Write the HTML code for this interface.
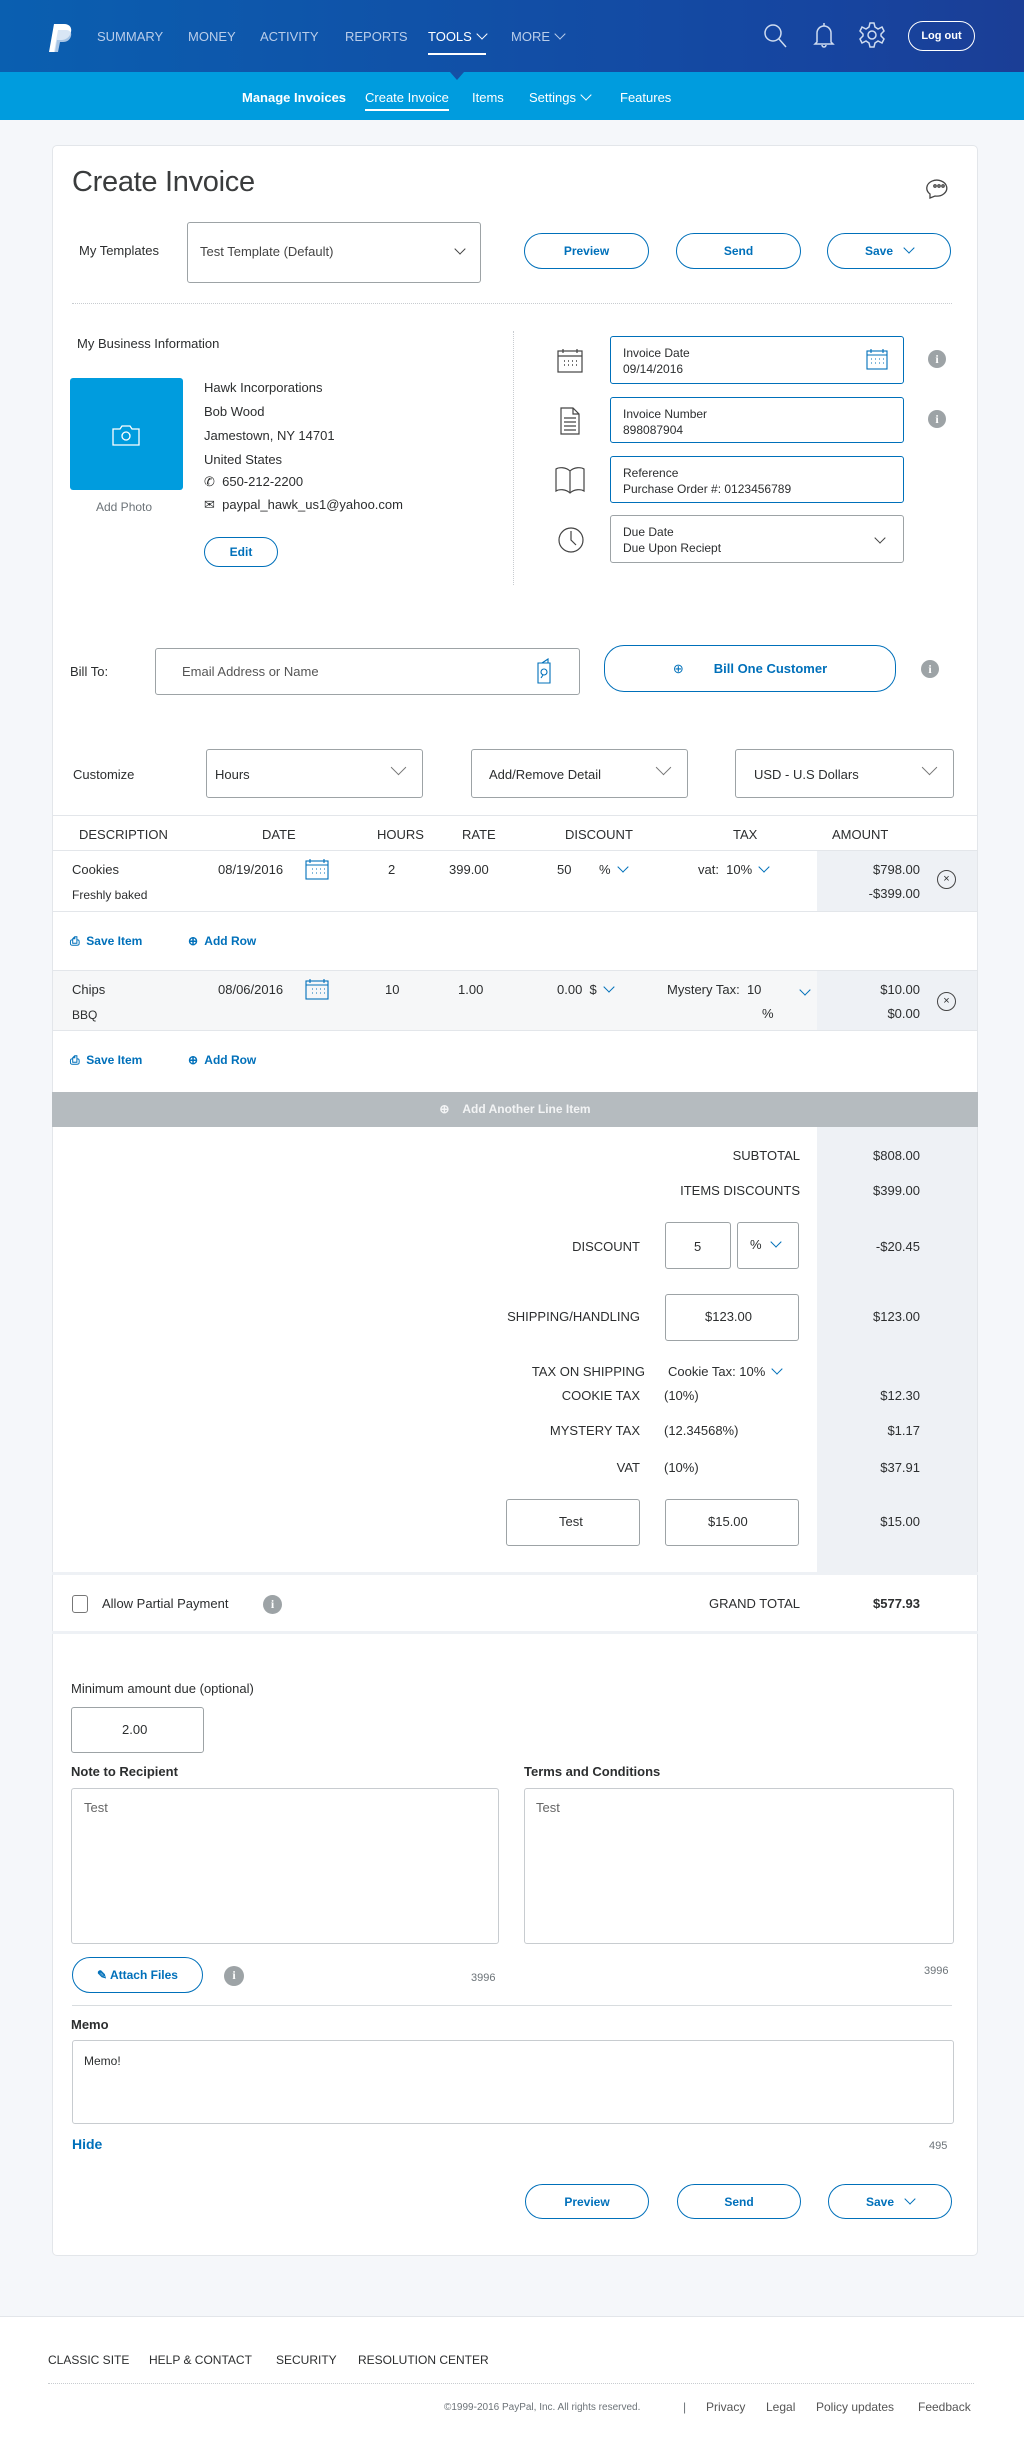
<!DOCTYPE html>
<html><head><meta charset="utf-8"><style>
*{box-sizing:border-box;margin:0;padding:0}
body{width:1024px;height:2449px;background:#f5f7fa;font-family:"Liberation Sans",sans-serif;color:#2c2e2f;position:relative;overflow:hidden;font-size:14px}
.a{position:absolute;white-space:nowrap}
.hdr{position:absolute;left:0;top:0;width:1024px;height:72px;background:linear-gradient(90deg,#0a5fb0,#1645a0 80%,#1b3e96)}
.sub{position:absolute;left:0;top:72px;width:1024px;height:48px;background:#009cde}
.nav{color:#b9cdea;font-size:13px;top:29px}
.sn{color:#fff;font-size:13px;top:90px}
.card{position:absolute;left:52px;top:145px;width:926px;height:2111px;background:#fff;border:1px solid #e3e6ea;border-radius:5px}
.btn{position:absolute;border:1.5px solid #0070ba;border-radius:20px;color:#0070ba;font-weight:bold;font-size:12px;display:flex;align-items:center;justify-content:center;background:#fff}
.box{position:absolute;border:1px solid #9da3a6;border-radius:3px;background:#fff}
.bbox{position:absolute;border:1px solid #0070ba;border-radius:3px;background:#fff;font-size:12px;padding:8px 12px;line-height:16px}
.info{position:absolute;width:18px;height:18px;border-radius:50%;background:#9da3a6;color:#fff;font-size:12px;font-weight:bold;text-align:center;line-height:18px;font-family:"Liberation Serif",serif}
.chev{display:inline-block;width:8px;height:8px;border-right:1.3px solid currentColor;border-bottom:1.3px solid currentColor;transform:rotate(45deg);margin-left:6px;position:relative;top:-3px}
.lbl{font-size:13px}
.r{text-align:right}
.blue{color:#0070ba}
</style></head><body>
<div class="hdr"></div>
<svg class="a" style="left:48px;top:22px" width="26" height="32" viewBox="0 0 26 32"><path d="M6 2h10c6 0 8 4 7 8-1 5-5 8-10 8H9l-2 12H1z" fill="#fff"/><path d="M10 8h8c4 0 6 3 5 6-1 4-4 6-8 6h-3l-2 10H6z" fill="#cfe0f2" opacity=".8"/></svg>
<div class="a nav" style="left:97px">SUMMARY</div>
<div class="a nav" style="left:188px">MONEY</div>
<div class="a nav" style="left:260px">ACTIVITY</div>
<div class="a nav" style="left:345px">REPORTS</div>
<div class="a nav" style="left:428px;color:#fff">TOOLS<span class="chev"></span></div>
<div class="a" style="left:428px;top:53px;width:58px;height:1.5px;background:#fff"></div>
<div class="a nav" style="left:511px">MORE<span class="chev"></span></div>
<svg class="a" style="left:762px;top:22px" width="26" height="28" viewBox="0 0 26 28" fill="none" stroke="#cfdcf0" stroke-width="1.5"><circle cx="11" cy="11" r="8"/><path d="M17 17l7 8"/></svg>
<svg class="a" style="left:812px;top:20px" width="24" height="30" viewBox="0 0 24 30" fill="none" stroke="#cfdcf0" stroke-width="1.5"><path d="M12 3v3M5 22V13a7 7 0 0114 0v9l2 2H3zM10 25a2 2 0 004 0"/></svg>
<svg class="a" style="left:858px;top:21px" width="28" height="28" viewBox="0 0 28 28" fill="none" stroke="#cfdcf0" stroke-width="1.5"><circle cx="14" cy="14" r="4"/><path d="M12 2h4l1 4 3 2 4-2 2 4-3 3v2l3 3-2 4-4-2-3 2-1 4h-4l-1-4-3-2-4 2-2-4 3-3v-2L2 10l2-4 4 2 3-2z"/></svg>
<div class="a" style="left:908px;top:21px;width:67px;height:30px;border:1.5px solid #fff;border-radius:15px;color:#fff;font-size:11px;font-weight:bold;display:flex;align-items:center;justify-content:center">Log out</div>
<div class="sub"></div>
<div class="a" style="left:450px;top:72px;width:0;height:0;border-left:7px solid transparent;border-right:7px solid transparent;border-top:8px solid #1450a6"></div>
<div class="a sn" style="left:242px;font-weight:bold">Manage Invoices</div>
<div class="a sn" style="left:365px">Create Invoice</div>
<div class="a" style="left:365px;top:109px;width:84px;height:1.5px;background:#fff"></div>
<div class="a sn" style="left:472px">Items</div>
<div class="a sn" style="left:529px">Settings<span class="chev"></span></div>
<div class="a sn" style="left:620px">Features</div>

<div class="card"></div>
<div class="a" style="left:72px;top:166px;font-size:29px;font-weight:300;color:#3a3c3d;letter-spacing:-0.3px">Create Invoice</div>
<svg class="a" style="left:926px;top:175px" width="26" height="24" viewBox="0 0 26 24" fill="none" stroke="#444" stroke-width="1.3"><path d="M4 19a10 8 0 1 1 5 2l-5 2z"/><circle cx="9" cy="11" r="1.2"/><circle cx="13" cy="11" r="1.2"/><circle cx="17" cy="11" r="1.2"/></svg>
<div class="a lbl" style="left:79px;top:243px">My Templates</div>
<div class="box" style="left:187px;top:222px;width:294px;height:61px"></div>
<div class="a lbl" style="left:200px;top:244px;color:#444">Test Template (Default)</div>
<div class="a" style="left:450px;top:243px;color:#444"><span class="chev"></span></div>
<div class="btn" style="left:524px;top:233px;width:125px;height:36px">Preview</div>
<div class="btn" style="left:676px;top:233px;width:125px;height:36px">Send</div>
<div class="btn" style="left:827px;top:233px;width:124px;height:36px">Save<span class="chev" style="margin-left:12px"></span></div>
<div class="a" style="left:72px;top:303px;width:880px;border-top:1px dotted #c8ccd0"></div>

<div class="a lbl" style="left:77px;top:336px">My Business Information</div>
<div class="a" style="left:70px;top:378px;width:113px;height:112px;background:#009cde;border-radius:3px"></div>
<svg class="a" style="left:112px;top:424px" width="28" height="22" viewBox="0 0 28 22" fill="none" stroke="#fff" stroke-width="1.3"><path d="M1 5h7l2-3h8l2 3h7v16H1z"/><circle cx="14" cy="12" r="4"/></svg>
<div class="a" style="left:96px;top:500px;font-size:12px;color:#6c7378">Add Photo</div>
<div class="a lbl" style="left:204px;top:376px;line-height:24px">Hawk Incorporations<br>Bob Wood<br>Jamestown, NY 14701<br>United States</div>
<div class="a lbl" style="left:204px;top:474px">✆&nbsp; 650-212-2200</div>
<div class="a lbl" style="left:204px;top:497px">✉&nbsp; paypal_hawk_us1@yahoo.com</div>
<div class="btn" style="left:204px;top:537px;width:74px;height:30px">Edit</div>
<div class="a" style="left:513px;top:331px;height:254px;border-left:1px dotted #c8ccd0"></div>

<svg class="a" style="left:556px;top:348px" width="28" height="26" viewBox="0 0 28 26" fill="none" stroke="#444" stroke-width="1.2"><rect x="2" y="3" width="24" height="21"/><path d="M2 8h24M7 1v4M21 1v4"/><path d="M8 13h1M12 13h1M16 13h1M20 13h1M8 17h1M12 17h1M16 17h1M20 17h1" stroke-width="1.5"/></svg>
<svg class="a" style="left:560px;top:407px" width="20" height="28" viewBox="0 0 20 28" fill="none" stroke="#444" stroke-width="1.2"><path d="M1 1h12l6 6v20H1zM13 1v6h6M4 11h12M4 15h12M4 19h12M4 23h12"/></svg>
<svg class="a" style="left:554px;top:466px" width="32" height="28" viewBox="0 0 32 28" fill="none" stroke="#444" stroke-width="1.2"><path d="M16 5C12 1 5 1 2 3v22c3-2 10-2 14 2 4-4 11-4 14-2V3c-3-2-10-2-14 2zM16 5v22"/></svg>
<svg class="a" style="left:557px;top:525px" width="28" height="30" viewBox="0 0 28 30" fill="none" stroke="#444" stroke-width="1.2"><circle cx="14" cy="15" r="12"/><path d="M14 6v9l5 5"/></svg>

<div class="bbox" style="left:610px;top:336px;width:294px;height:48px">Invoice Date<br>09/14/2016</div>
<svg class="a" style="left:866px;top:348px" width="22" height="22" viewBox="0 0 22 22" fill="none" stroke="#0070ba" stroke-width="1.1"><rect x="1" y="3" width="20" height="18"/><path d="M1 7h20M5 1v4M17 1v4M5 11h1M9 11h1M13 11h1M17 11h1M5 15h1M9 15h1M13 15h1M17 15h1"/></svg>
<div class="info" style="left:928px;top:350px">i</div>
<div class="bbox" style="left:610px;top:397px;width:294px;height:46px">Invoice Number<br>898087904</div>
<div class="info" style="left:928px;top:410px">i</div>
<div class="bbox" style="left:610px;top:456px;width:294px;height:47px">Reference<br>Purchase Order #: 0123456789</div>
<div class="bbox" style="left:610px;top:515px;width:294px;height:48px;border-color:#9da3a6">Due Date<br>Due Upon Reciept</div>
<div class="a" style="left:870px;top:532px;color:#444"><span class="chev"></span></div>

<div class="a lbl" style="left:70px;top:664px">Bill To:</div>
<div class="box" style="left:155px;top:648px;width:425px;height:47px"></div>
<div class="a lbl" style="left:182px;top:664px;color:#555">Email Address or Name</div>
<svg class="a" style="left:537px;top:658px" width="14" height="26" viewBox="0 0 14 26" fill="none" stroke="#0070ba" stroke-width="1.1"><path d="M1 5h12v20H1zM5 5l6-4v4"/><circle cx="7" cy="14" r="3"/><path d="M6 17l-2 3"/></svg>
<div class="btn" style="left:604px;top:645px;width:292px;height:47px;font-size:13px"><span style="font-weight:normal;margin-right:30px">⊕</span>Bill One Customer</div>
<div class="info" style="left:921px;top:660px">i</div>

<div class="a lbl" style="left:73px;top:767px">Customize</div>
<div class="box" style="left:206px;top:749px;width:217px;height:49px"></div>
<div class="a lbl" style="left:215px;top:767px">Hours</div>
<div class="a" style="left:387px;top:763px;color:#777;font-size:15px"><span class="chev" style="width:11px;height:11px"></span></div>
<div class="box" style="left:471px;top:749px;width:217px;height:49px"></div>
<div class="a lbl" style="left:489px;top:767px">Add/Remove Detail</div>
<div class="a" style="left:652px;top:763px;color:#777"><span class="chev" style="width:11px;height:11px"></span></div>
<div class="box" style="left:735px;top:749px;width:219px;height:49px"></div>
<div class="a lbl" style="left:754px;top:767px">USD - U.S Dollars</div>
<div class="a" style="left:918px;top:763px;color:#777"><span class="chev" style="width:11px;height:11px"></span></div>

<div class="a" style="left:52px;top:815px;width:926px;height:1px;background:#e3e6ea"></div>
<div class="a" style="left:52px;top:850px;width:926px;height:1px;background:#e3e6ea"></div>
<div class="a lbl" style="left:79px;top:827px">DESCRIPTION</div>
<div class="a lbl" style="left:262px;top:827px">DATE</div>
<div class="a lbl" style="left:377px;top:827px">HOURS</div>
<div class="a lbl" style="left:462px;top:827px">RATE</div>
<div class="a lbl" style="left:565px;top:827px">DISCOUNT</div>
<div class="a lbl" style="left:733px;top:827px">TAX</div>
<div class="a lbl" style="left:832px;top:827px">AMOUNT</div>

<div class="a" style="left:817px;top:851px;width:160px;height:60px;background:#eef1f5"></div>
<div class="a" style="left:52px;top:911px;width:926px;height:1px;background:#e3e6ea"></div>
<div class="a lbl" style="left:72px;top:862px">Cookies</div>
<div class="a" style="left:72px;top:888px;font-size:12px">Freshly baked</div>
<div class="a lbl" style="left:218px;top:862px">08/19/2016</div>
<svg class="a" style="left:305px;top:858px" width="24" height="22" viewBox="0 0 24 22" fill="none" stroke="#0070ba" stroke-width="1.1"><rect x="1" y="3" width="22" height="18"/><path d="M1 7h22M5 1v4M19 1v4M7 11h1M11 11h1M15 11h1M19 11h1M7 15h1M11 15h1M15 15h1M19 15h1"/></svg>
<div class="a lbl" style="left:388px;top:862px">2</div>
<div class="a lbl" style="left:449px;top:862px">399.00</div>
<div class="a lbl" style="left:557px;top:862px">50</div>
<div class="a lbl" style="left:599px;top:862px">%<span class="chev blue" style="margin-left:8px"></span></div>
<div class="a lbl" style="left:698px;top:862px">vat:&nbsp; 10%<span class="chev blue" style="margin-left:8px"></span></div>
<div class="a lbl r" style="left:820px;width:100px;top:862px">$798.00</div>
<div class="a lbl r" style="left:820px;width:100px;top:886px">-$399.00</div>
<div class="a" style="left:937px;top:870px;width:19px;height:19px;border:1px solid #444;border-radius:50%;font-size:11px;text-align:center;line-height:16px">×</div>

<div class="a blue" style="left:70px;top:934px;font-size:12px;font-weight:bold">⎙&nbsp; Save Item</div>
<div class="a blue" style="left:188px;top:934px;font-size:12px;font-weight:bold">⊕&nbsp; Add Row</div>

<div class="a" style="left:53px;top:970px;width:924px;height:61px;background:#f6f7f8;border-top:1px solid #e3e6ea;border-bottom:1px solid #e3e6ea"></div>
<div class="a" style="left:817px;top:971px;width:160px;height:59px;background:#eef1f5"></div>
<div class="a lbl" style="left:72px;top:982px">Chips</div>
<div class="a" style="left:72px;top:1008px;font-size:12px">BBQ</div>
<div class="a lbl" style="left:218px;top:982px">08/06/2016</div>
<svg class="a" style="left:305px;top:978px" width="24" height="22" viewBox="0 0 24 22" fill="none" stroke="#0070ba" stroke-width="1.1"><rect x="1" y="3" width="22" height="18"/><path d="M1 7h22M5 1v4M19 1v4M7 11h1M11 11h1M15 11h1M19 11h1M7 15h1M11 15h1M15 15h1M19 15h1"/></svg>
<div class="a lbl" style="left:385px;top:982px">10</div>
<div class="a lbl" style="left:458px;top:982px">1.00</div>
<div class="a lbl" style="left:557px;top:982px">0.00&nbsp; $<span class="chev blue" style="margin-left:8px"></span></div>
<div class="a lbl" style="left:667px;top:982px">Mystery Tax:&nbsp; 10</div>
<div class="a lbl blue" style="left:795px;top:985px"><span class="chev"></span></div>
<div class="a lbl" style="left:762px;top:1006px">%</div>
<div class="a lbl r" style="left:820px;width:100px;top:982px">$10.00</div>
<div class="a lbl r" style="left:820px;width:100px;top:1006px">$0.00</div>
<div class="a" style="left:937px;top:992px;width:19px;height:19px;border:1px solid #444;border-radius:50%;font-size:11px;text-align:center;line-height:16px">×</div>

<div class="a blue" style="left:70px;top:1053px;font-size:12px;font-weight:bold">⎙&nbsp; Save Item</div>
<div class="a blue" style="left:188px;top:1053px;font-size:12px;font-weight:bold">⊕&nbsp; Add Row</div>

<div class="a" style="left:52px;top:1092px;width:926px;height:35px;background:#b5bbbf;color:#f3f4f5;font-size:12px;font-weight:bold;text-align:center;line-height:35px">⊕ &nbsp;&nbsp; Add Another Line Item</div>

<div class="a" style="left:817px;top:1127px;width:160px;height:445px;background:#eef1f5"></div>
<div class="a lbl r" style="left:500px;width:300px;top:1148px">SUBTOTAL</div>
<div class="a lbl r" style="left:820px;width:100px;top:1148px">$808.00</div>
<div class="a lbl r" style="left:500px;width:300px;top:1183px">ITEMS DISCOUNTS</div>
<div class="a lbl r" style="left:820px;width:100px;top:1183px">$399.00</div>
<div class="a lbl r" style="left:340px;width:300px;top:1239px">DISCOUNT</div>
<div class="box" style="left:665px;top:1222px;width:66px;height:47px"></div>
<div class="a lbl" style="left:694px;top:1239px">5</div>
<div class="box" style="left:737px;top:1222px;width:62px;height:47px"></div>
<div class="a lbl" style="left:750px;top:1237px">%<span class="chev blue" style="margin-left:10px"></span></div>
<div class="a lbl r" style="left:820px;width:100px;top:1239px">-$20.45</div>
<div class="a lbl r" style="left:340px;width:300px;top:1309px">SHIPPING/HANDLING</div>
<div class="box" style="left:665px;top:1294px;width:134px;height:47px"></div>
<div class="a lbl" style="left:705px;top:1309px">$123.00</div>
<div class="a lbl r" style="left:820px;width:100px;top:1309px">$123.00</div>
<div class="a lbl r" style="left:345px;width:300px;top:1364px">TAX ON SHIPPING</div>
<div class="a lbl" style="left:668px;top:1364px">Cookie Tax: 10%<span class="chev blue" style="margin-left:8px"></span></div>
<div class="a lbl r" style="left:340px;width:300px;top:1388px">COOKIE TAX</div>
<div class="a lbl" style="left:664px;top:1388px">(10%)</div>
<div class="a lbl r" style="left:820px;width:100px;top:1388px">$12.30</div>
<div class="a lbl r" style="left:340px;width:300px;top:1423px">MYSTERY TAX</div>
<div class="a lbl" style="left:664px;top:1423px">(12.34568%)</div>
<div class="a lbl r" style="left:820px;width:100px;top:1423px">$1.17</div>
<div class="a lbl r" style="left:340px;width:300px;top:1460px">VAT</div>
<div class="a lbl" style="left:664px;top:1460px">(10%)</div>
<div class="a lbl r" style="left:820px;width:100px;top:1460px">$37.91</div>
<div class="box" style="left:506px;top:1499px;width:134px;height:47px"></div>
<div class="a lbl" style="left:559px;top:1514px">Test</div>
<div class="box" style="left:665px;top:1499px;width:134px;height:47px"></div>
<div class="a lbl" style="left:708px;top:1514px">$15.00</div>
<div class="a lbl r" style="left:820px;width:100px;top:1514px">$15.00</div>

<div class="a" style="left:52px;top:1572px;width:926px;height:3px;background:#eef1f5"></div>
<div class="a" style="left:72px;top:1595px;width:16px;height:18px;border:1px solid #777;border-radius:3px"></div>
<div class="a lbl" style="left:102px;top:1596px">Allow Partial Payment</div>
<div class="info" style="left:263px;top:1595px;width:19px;height:19px">i</div>
<div class="a lbl r" style="left:500px;width:300px;top:1596px">GRAND TOTAL</div>
<div class="a lbl r" style="left:820px;width:100px;top:1596px;font-weight:bold">$577.93</div>
<div class="a" style="left:52px;top:1631px;width:926px;height:3px;background:#eef1f5"></div>

<div class="a lbl" style="left:71px;top:1681px">Minimum amount due (optional)</div>
<div class="box" style="left:71px;top:1707px;width:133px;height:46px"></div>
<div class="a lbl" style="left:122px;top:1722px">2.00</div>
<div class="a lbl" style="left:71px;top:1764px;font-weight:bold">Note to Recipient</div>
<div class="a lbl" style="left:524px;top:1764px;font-weight:bold">Terms and Conditions</div>
<div class="box" style="left:71px;top:1788px;width:428px;height:156px;border-color:#c8ccd0"></div>
<div class="a lbl" style="left:84px;top:1800px;color:#666">Test</div>
<div class="box" style="left:524px;top:1788px;width:430px;height:156px;border-color:#c8ccd0"></div>
<div class="a lbl" style="left:536px;top:1800px;color:#666">Test</div>
<div class="btn" style="left:72px;top:1957px;width:131px;height:36px">✎ Attach Files</div>
<div class="info" style="left:224px;top:1966px;width:20px;height:20px">i</div>
<div class="a" style="left:471px;top:1972px;font-size:11px;color:#6c7378">3996</div>
<div class="a" style="left:924px;top:1965px;font-size:11px;color:#6c7378">3996</div>
<div class="a" style="left:72px;top:2005px;width:880px;height:1px;background:#d8dcdf"></div>
<div class="a lbl" style="left:71px;top:2017px;font-weight:bold">Memo</div>
<div class="box" style="left:72px;top:2040px;width:882px;height:84px;border-color:#c8ccd0"></div>
<div class="a" style="left:84px;top:2054px;font-size:12px">Memo!</div>
<div class="a blue" style="left:72px;top:2136px;font-size:14px;font-weight:bold">Hide</div>
<div class="a" style="left:929px;top:2140px;font-size:11px;color:#6c7378">495</div>
<div class="btn" style="left:525px;top:2184px;width:124px;height:35px">Preview</div>
<div class="btn" style="left:677px;top:2184px;width:124px;height:35px">Send</div>
<div class="btn" style="left:828px;top:2184px;width:124px;height:35px">Save<span class="chev" style="margin-left:12px"></span></div>

<div class="a" style="left:0;top:2316px;width:1024px;height:133px;background:#fff;border-top:1px solid #e3e6ea"></div>
<div class="a" style="left:48px;top:2353px;font-size:12px">CLASSIC SITE</div>
<div class="a" style="left:149px;top:2353px;font-size:12px">HELP &amp; CONTACT</div>
<div class="a" style="left:276px;top:2353px;font-size:12px">SECURITY</div>
<div class="a" style="left:358px;top:2353px;font-size:12px">RESOLUTION CENTER</div>
<div class="a" style="left:48px;top:2383px;width:926px;border-top:1px dotted #c8ccd0"></div>
<div class="a" style="left:444px;top:2402px;font-size:10px;color:#6c7378">©1999-2016 PayPal, Inc. All rights reserved.</div>
<div class="a" style="left:683px;top:2400px;font-size:12px;color:#6c7378">|</div>
<div class="a" style="left:706px;top:2400px;font-size:12px;color:#555">Privacy</div>
<div class="a" style="left:766px;top:2400px;font-size:12px;color:#555">Legal</div>
<div class="a" style="left:816px;top:2400px;font-size:12px;color:#555">Policy updates</div>
<div class="a" style="left:918px;top:2400px;font-size:12px;color:#555">Feedback</div>
</body></html>
